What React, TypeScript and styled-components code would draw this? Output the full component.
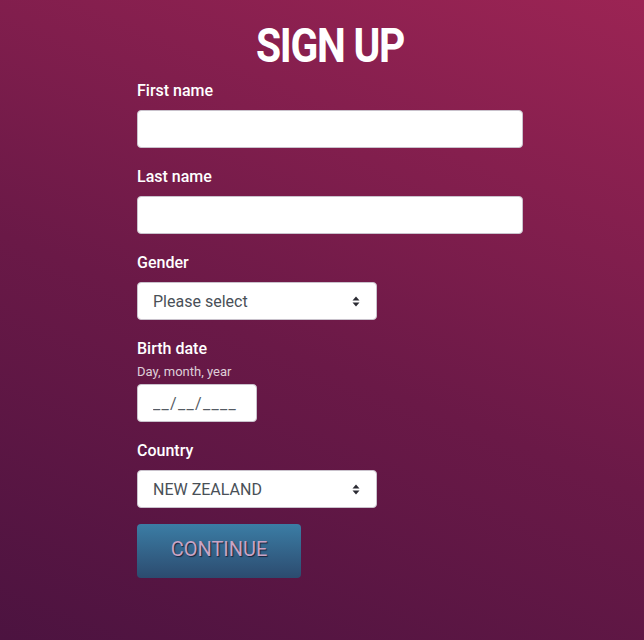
import React from 'react';
import styled, { createGlobalStyle } from 'styled-components';

const GlobalStyle = createGlobalStyle`
  html, body {
    margin: 0;
    padding: 0;
  }
  body {
    font-family: Roboto, "Liberation Sans", sans-serif;
    color: #fff;
    background: #4f1440;
  }
`;

const SelectArrows: React.FC = () => (
  <ArrowIcon width="8" height="11" viewBox="0 0 8 11">
    <path d="M4 0.5 L7.5 4.5 H0.5 Z" fill="#2b2b33"/>
    <path d="M4 10.5 L7.5 6.5 H0.5 Z" fill="#2b2b33"/>
  </ArrowIcon>
);

export default function App() {
  return (
    <Page>
      <GlobalStyle/>
      <Form onSubmit={(e) => e.preventDefault()}>
        <Title>SIGN UP</Title>

        <Field>
          <Label>First name</Label>
          <TextInput type="text"/>
        </Field>

        <Field>
          <Label>Last name</Label>
          <TextInput type="text"/>
        </Field>

        <Field>
          <Label>Gender</Label>
          <SelectWrap>
            <Select defaultValue="">
              <option value="">Please select</option>
              <option value="f">Female</option>
              <option value="m">Male</option>
            </Select>
            <SelectArrows/>
          </SelectWrap>
        </Field>

        <Field>
          <Label $tight>Birth date</Label>
          <Hint>Day, month, year</Hint>
          <DateInput type="text" placeholder="__/__/____"/>
        </Field>

        <Field>
          <Label>Country</Label>
          <SelectWrap>
            <Select defaultValue="nz" $upper>
              <option value="nz">NEW ZEALAND</option>
              <option value="au">AUSTRALIA</option>
            </Select>
            <SelectArrows/>
          </SelectWrap>
        </Field>

        <ContinueButton type="submit">CONTINUE</ContinueButton>
      </Form>
    </Page>
  );
}

const Page = styled.div`
    min-height: 640px;
    box-sizing: border-box;
    padding: 18px 0 40px 16px;
    background: linear-gradient(22deg, #4c1340 0%, #6a1947 45%, #9c2454 100%);
  `,
  Form = styled.form`
    width: 386px;
    margin: 0 auto;
    display: flex;
    flex-direction: column;
  `,
  Title = styled.h1`
    margin: 0 0 6px;
    font-size: 48px;
    line-height: 56px;
    font-weight: 700;
    text-align: center;
    letter-spacing: -1.5px;
    transform: scaleX(0.85);
  `,
  Field = styled.div`
    display: flex;
    flex-direction: column;
    align-items: flex-start;
    margin-bottom: 18px;
  `,
  Label = styled.label<{ $tight?: boolean }>`
    font-size: 16px;
    line-height: 21px;
    font-weight: 500;
    margin-bottom: ${({ $tight }) => ($tight ? '5px' : '9px')};
  `,
  Hint = styled.span`
    font-size: 13px;
    line-height: 16px;
    color: rgba(255, 255, 255, 0.8);
    margin-bottom: 4px;
  `,
  TextInput = styled.input`
    box-sizing: border-box;
    width: 100%;
    height: 38px;
    border: 1px solid #c9c2cc;
    border-radius: 4px;
    background: #fff;
    padding: 0 15px;
    font-family: inherit;
    font-size: 16px;
    color: #495057;
    outline: none;
  `,
  DateInput = styled(TextInput)`
    width: 120px;
    &::placeholder {
      color: #555b63;
      letter-spacing: 1.3px;
    }
  `,
  SelectWrap = styled.div`
    position: relative;
    width: 240px;
  `,
  Select = styled.select<{ $upper?: boolean }>`
    appearance: none;
    box-sizing: border-box;
    width: 100%;
    height: 38px;
    border: 1px solid #c9c2cc;
    border-radius: 4px;
    background: #fff;
    padding: 0 32px 0 15px;
    font-family: inherit;
    font-size: 16px;
    color: #495057;
    outline: none;
    text-transform: ${({ $upper }) => ($upper ? 'uppercase' : 'none')};
  `,
  ArrowIcon = styled.svg`
    position: absolute;
    right: 17px;
    top: 14px;
    pointer-events: none;
  `,
  ContinueButton = styled.button`
    align-self: flex-start;
    margin-top: -2px;
    width: 164px;
    height: 54px;
    border: none;
    border-radius: 4px;
    background: linear-gradient(180deg, #3b7da5 0%, #2c4b6f 100%);
    font-family: inherit;
    font-size: 20px;
    font-weight: 400;
    color: #c9a4c4;
    text-shadow: 1px 1px 1px rgba(20, 20, 40, 0.8);
    padding: 0 0 4px;
    cursor: pointer;
  `;
